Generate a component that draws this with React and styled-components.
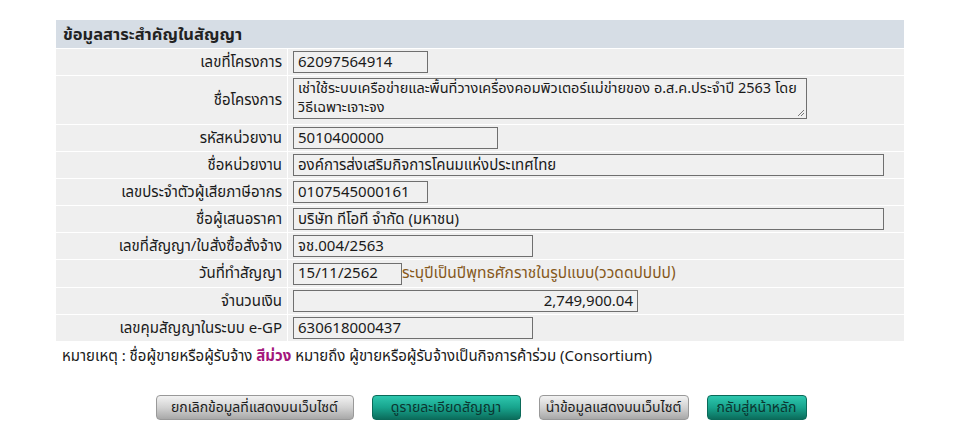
import React from "react";
import styled, { createGlobalStyle } from "styled-components";

const GlobalStyle = createGlobalStyle`
  html, body {
    margin: 0;
    padding: 0;
    background: #fff;
  }
  body {
    font-family: Tahoma, "Noto Sans Thai", "Noto Sans", "DejaVu Sans", sans-serif;
    font-size: 15px;
    color: #1a1a1a;
  }
`;

const Page = styled.div`
  width: 962px;
  padding-top: 20px;
`;

const Table = styled.div`
  width: 848px;
  margin-left: 56px;
  display: grid;
  grid-template-columns: 231px 1fr;
  gap: 1px;
  background: #fff;
`;

const Header = styled.div`
  grid-column: 1 / span 2;
  height: 28px;
  background: #d6dde5;
  display: flex;
  align-items: center;
  padding-left: 7px;
  font-weight: bold;
  font-size: 16.5px;
  color: #222;
`;

const Label = styled.div`
  background: #efefef;
  display: flex;
  align-items: center;
  justify-content: flex-end;
  padding-right: 5px;
  white-space: nowrap;
`;

const Value = styled.div`
  background: #efefef;
  display: flex;
  align-items: center;
  padding: ${(p) => (p.$tall ? "2px 5px 5px" : "2px 5px")};
`;

const Field = styled.div`
  box-sizing: border-box;
  width: ${(p) => p.$w}px;
  height: 22px;
  border: 1px solid #6f6f6f;
  background: #f0f0f0;
  padding: 0 4px;
  display: flex;
  align-items: center;
  justify-content: ${(p) => (p.$right ? "flex-end" : "flex-start")};
  white-space: nowrap;
  overflow: hidden;
`;

const Area = styled.div`
  position: relative;
  box-sizing: border-box;
  width: ${(p) => p.$w}px;
  height: 41px;
  border: 1px solid #6f6f6f;
  background: #f0f0f0;
  padding: 1px 4px 0;
  font-size: 14.5px;
  line-height: 19px;
  white-space: nowrap;
  overflow: hidden;
`;

const Grip = styled.svg`
  position: absolute;
  right: 1px;
  bottom: 1px;
`;

const Hint = styled.span`
  color: #86591c;
  font-size: 15.5px;
  white-space: nowrap;
`;

const Note = styled.div`
  margin: 5px 0 0 62px;
  height: 20px;
  display: flex;
  align-items: center;
  white-space: nowrap;
`;

const Purple = styled.b`
  color: #a3157c;
`;

const Buttons = styled.div`
  display: flex;
  justify-content: center;
  gap: 18px;
  margin-top: 29px;
`;

const Button = styled.button`
  box-sizing: border-box;
  width: ${(p) => p.$w}px;
  height: 25px;
  padding: 0;
  border-radius: 4px;
  font-family: inherit;
  font-size: 14px;
  white-space: nowrap;
  cursor: pointer;
  ${(p) =>
    p.$teal
      ? `
    background: linear-gradient(#2ec7ae, #18a48d 50%, #0b6d5c);
    border: 1px solid #0b6a59;
    color: #0b3630;
  `
      : `
    background: linear-gradient(#f2f2f2, #d2d2d2 50%, #a8a8a8);
    border: 1px solid #999;
    color: #1c1c1c;
  `}
`;

const rows = [
  { label: "เลขที่โครงการ", value: "62097564914", w: 135 },
  {
    label: "ชื่อโครงการ",
    area: true,
    lines: [
      "เช่าใช้ระบบเครือข่ายและพื้นที่วางเครื่องคอมพิวเตอร์แม่ข่ายของ อ.ส.ค.ประจำปี 2563 โดย",
      "วิธีเฉพาะเจาะจง",
    ],
    w: 514,
  },
  { label: "รหัสหน่วยงาน", value: "5010400000", w: 205 },
  { label: "ชื่อหน่วยงาน", value: "องค์การส่งเสริมกิจการโคนมแห่งประเทศไทย", w: 591 },
  { label: "เลขประจำตัวผู้เสียภาษีอากร", value: "0107545000161", w: 135 },
  { label: "ชื่อผู้เสนอราคา", value: "บริษัท ทีโอที จำกัด (มหาชน)", w: 591 },
  { label: "เลขที่สัญญา/ใบสั่งซื้อสั่งจ้าง", value: "จช.004/2563", w: 240 },
  {
    label: "วันที่ทำสัญญา",
    value: "15/11/2562",
    w: 109,
    hint: "ระบุปีเป็นปีพุทธศักราชในรูปแบบ(ววดดปปปป)",
  },
  { label: "จำนวนเงิน", value: "2,749,900.04", w: 345, right: true },
  { label: "เลขคุมสัญญาในระบบ e-GP", value: "630618000437", w: 240 },
];

const App = () => {
  return (
    <Page>
      <GlobalStyle />
      <Table>
        <Header>ข้อมูลสาระสำคัญในสัญญา</Header>
        {rows.map((r) => (
          <React.Fragment key={r.label}>
            <Label>{r.label}</Label>
            <Value $tall={r.area}>
              {r.area ? (
                <Area $w={r.w}>
                  {r.lines[0]}
                  <br />
                  {r.lines[1]}
                  <Grip width="9" height="9" viewBox="0 0 9 9">
                    <path d="M8 2 L2 8 M8 5 L5 8" stroke="#777" strokeWidth="1" />
                  </Grip>
                </Area>
              ) : (
                <Field $w={r.w} $right={r.right}>
                  {r.value}
                </Field>
              )}
              {r.hint && <Hint>{r.hint}</Hint>}
            </Value>
          </React.Fragment>
        ))}
      </Table>
      <Note>
        หมายเหตุ : ชื่อผู้ขายหรือผู้รับจ้าง&nbsp;<Purple>สีม่วง</Purple>&nbsp;หมายถึง
        ผู้ขายหรือผู้รับจ้างเป็นกิจการค้าร่วม (Consortium)
      </Note>
      <Buttons>
        <Button $w={198}>ยกเลิกข้อมูลที่แสดงบนเว็บไซต์</Button>
        <Button $w={149} $teal>
          ดูรายละเอียดสัญญา
        </Button>
        <Button $w={150}>นำข้อมูลแสดงบนเว็บไซต์</Button>
        <Button $w={100} $teal>
          กลับสู่หน้าหลัก
        </Button>
      </Buttons>
    </Page>
  );
};

export default App;
